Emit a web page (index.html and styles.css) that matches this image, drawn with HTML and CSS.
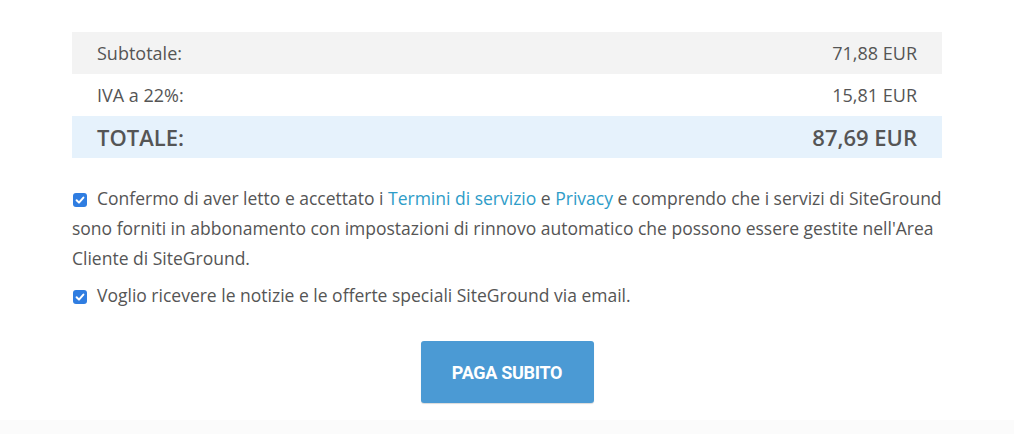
FILE: index.html
```html
<!DOCTYPE html>
<html lang="it">
<head>
<meta charset="utf-8">
<link rel="stylesheet" href="styles.css">
</head>
<body>
<main class="page">
  <section class="summary">
    <div class="row row-gray"><span>Subtotale:</span><span>71,88 EUR</span></div>
    <div class="row"><span>IVA a 22%:</span><span>15,81 EUR</span></div>
    <div class="row row-total"><span>TOTALE:</span><span>87,69 EUR</span></div>
  </section>
  <section class="terms">
    <p class="check-line"><span class="box"><svg viewBox="0 0 14 14" width="14" height="14"><path d="M3.6 7.2 L6 9.6 L10.4 4.6" fill="none" stroke="#fff" stroke-width="2" stroke-linecap="round" stroke-linejoin="round"/></svg></span>Confermo di aver letto e accettato i <a href="#">Termini di servizio</a> e <a href="#">Privacy</a> e comprendo che i servizi di SiteGround sono forniti in abbonamento con impostazioni di rinnovo automatico che possono essere gestite nell'Area Cliente di SiteGround.</p>
    <p class="check-line"><span class="box"><svg viewBox="0 0 14 14" width="14" height="14"><path d="M3.6 7.2 L6 9.6 L10.4 4.6" fill="none" stroke="#fff" stroke-width="2" stroke-linecap="round" stroke-linejoin="round"/></svg></span>Voglio ricevere le notizie e le offerte speciali SiteGround via email.</p>
  </section>
  <div class="actions"><button class="pay">PAGA SUBITO</button></div>
</main>
<footer class="bottom"></footer>
</body>
</html>
```
FILE: styles.css
```css
html, body {
  margin: 0;
  padding: 0;
  background: #fff;
}
body {
  font-family: "Open Sans", "Liberation Sans", sans-serif;
  color: #555;
  height: 434px;
  overflow: hidden;
}
.page {
  width: 870px;
  margin: 0 0 0 72px;
  padding-top: 32px;
}
.summary {
  display: flex;
  flex-direction: column;
}
.row {
  display: flex;
  justify-content: space-between;
  align-items: center;
  height: 42px;
  padding: 0 25px 0 25px;
  font-size: 18px;
  color: #555;
}
.row-gray { background: #f3f3f3; }
.row-total {
  background: #e6f2fc;
  font-size: 22px;
  font-weight: 600;
  color: #555;
}
.terms {
  margin-top: 25px;
  margin-right: -14px;
}
.check-line {
  margin: 0 0 7px;
  font-size: 17.5px;
  line-height: 30px;
  color: #555;
}
.check-line a {
  color: #2e9cc8;
  text-decoration: none;
}
.box {
  display: inline-block;
  width: 14px;
  height: 14px;
  background: #2f7de1;
  border-radius: 3px;
  vertical-align: -2px;
  margin: 0 10px 0 1px;
}
.box svg { display: block; }
.actions {
  display: flex;
  justify-content: center;
  margin-top: 31px;
  margin-left: -72px;
  width: 1014px;
}
.pay {
  width: 173px;
  height: 62px;
  border: 0;
  border-radius: 3px;
  background: #4b9ad4;
  color: #fff;
  font-family: Roboto, "Liberation Sans", sans-serif;
  font-weight: 700;
  font-size: 18px;
  letter-spacing: -0.3px;
  box-shadow: 0 1px 1px rgba(0,0,0,0.15);
}
.bottom {
  margin-top: 17px;
  height: 20px;
  background: #fbfbfb;
}
```
